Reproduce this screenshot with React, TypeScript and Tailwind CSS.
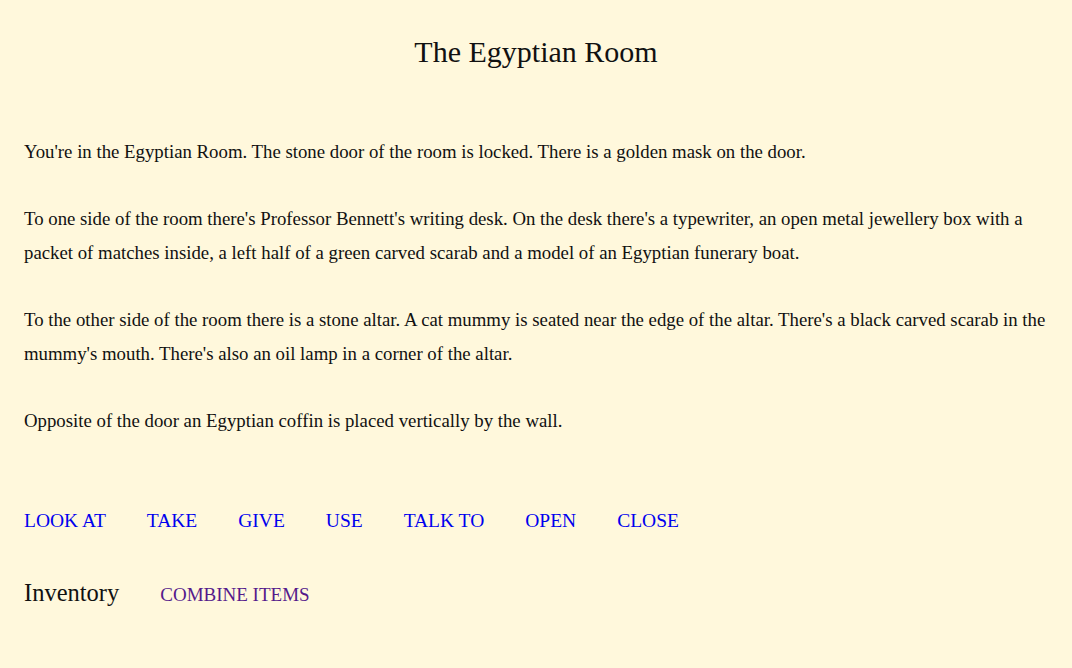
import React from 'react';

const actions = ['LOOK AT', 'TAKE', 'GIVE', 'USE', 'TALK TO', 'OPEN', 'CLOSE'];

export default function App() {
  return (
    <div className="min-h-[668px] bg-[#fff8dc] px-6 pt-[34px] text-[#111] font-['Liberation_Serif',serif]">
      <h1 className="text-center text-[30px] leading-[36px]">The Egyptian Room</h1>

      <div className="mt-[65px] text-[18.8px] leading-[34px]">
        <p>You're in the Egyptian Room. The stone door of the room is locked. There is a golden mask on the door.</p>
        <p className="mt-[33px]">
          To one side of the room there's Professor Bennett's writing desk. On the desk there's a typewriter, an open metal jewellery box with a packet of matches inside, a left half of a green carved scarab and a model of an Egyptian funerary boat.
        </p>
        <p className="mt-[33px]">
          To the other side of the room there is a stone altar. A cat mummy is seated near the edge of the altar. There's a black carved scarab in the mummy's mouth. There's also an oil lamp in a corner of the altar.
        </p>
        <p className="mt-[33px]">Opposite of the door an Egyptian coffin is placed vertically by the wall.</p>
      </div>

      <div className="mt-[66px] flex gap-[41px] text-[19.5px] leading-[34px]">
        {actions.map((a) => (
          <a key={a} href="#" className="text-[#0000ee]">{a}</a>
        ))}
      </div>

      <div className="mt-[38px] flex items-baseline gap-[41px]">
        <h2 className="text-[24.5px] leading-[34px]">Inventory</h2>
        <a href="#" className="text-[19px] text-[#551a8b]">COMBINE ITEMS</a>
      </div>
    </div>
  );
}
